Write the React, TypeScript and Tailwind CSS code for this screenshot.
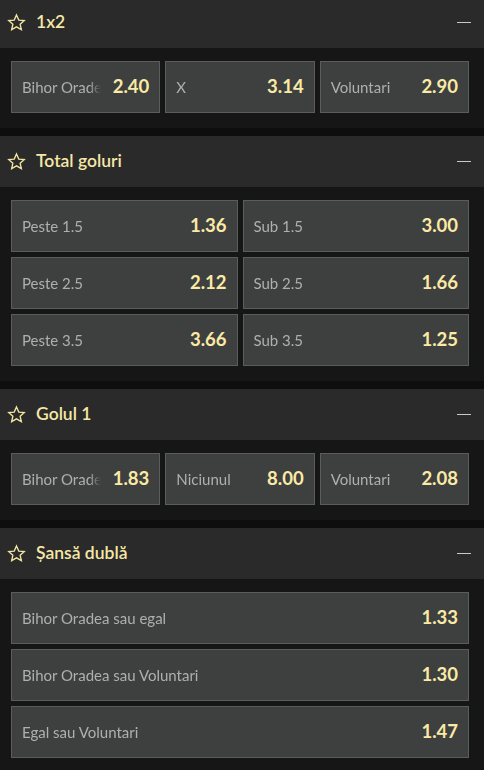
import React from "react";

// Odds market list (dark theme)

interface Selection {
  label: string;
  odds: string;
}

interface Market {
  title: string;
  cols: 1 | 2 | 3;
  selections: Selection[];
}

const markets: Market[] = [
  {
    title: "1x2",
    cols: 3,
    selections: [
      { label: "Bihor Oradea", odds: "2.40" },
      { label: "X", odds: "3.14" },
      { label: "Voluntari", odds: "2.90" },
    ],
  },
  {
    title: "Total goluri",
    cols: 2,
    selections: [
      { label: "Peste 1.5", odds: "1.36" },
      { label: "Sub 1.5", odds: "3.00" },
      { label: "Peste 2.5", odds: "2.12" },
      { label: "Sub 2.5", odds: "1.66" },
      { label: "Peste 3.5", odds: "3.66" },
      { label: "Sub 3.5", odds: "1.25" },
    ],
  },
  {
    title: "Golul 1",
    cols: 3,
    selections: [
      { label: "Bihor Oradea", odds: "1.83" },
      { label: "Niciunul", odds: "8.00" },
      { label: "Voluntari", odds: "2.08" },
    ],
  },
  {
    title: "Șansă dublă",
    cols: 1,
    selections: [
      { label: "Bihor Oradea sau egal", odds: "1.33" },
      { label: "Bihor Oradea sau Voluntari", odds: "1.30" },
      { label: "Egal sau Voluntari", odds: "1.47" },
    ],
  },
];

const StarIcon = () => (
  <svg width="19" height="19" viewBox="0 0 24 24" className="shrink-0">
    <polygon
      points="12,2.5 14.9,8.9 21.8,9.6 16.6,14.2 18.1,21 12,17.5 5.9,21 7.4,14.2 2.2,9.6 9.1,8.9"
      fill="none"
      stroke="#f3e4a2"
      strokeWidth="1.7"
      strokeLinejoin="miter"
    />
  </svg>
);

const gridCols = {
  1: "grid-cols-1",
  2: "grid-cols-2",
  3: "grid-cols-3",
};

const OddsButton: React.FC<{ sel: Selection }> = ({ sel }) => (
  <button className="flex h-[52px] items-center gap-[12px] border border-[#5b5d5c] bg-[#3e403f] pl-[10px] pr-[10px] text-left">
    <span
      className="min-w-0 flex-1 overflow-hidden whitespace-nowrap text-[15px] text-[#aeafae] [mask-image:linear-gradient(to_left,transparent_0,black_12px)]"
    >
      {sel.label}
    </span>
    <span className="shrink-0 text-[18.5px] font-bold text-[#fbeaa6]">
      {sel.odds}
    </span>
  </button>
);

const MarketBlock: React.FC<{ market: Market }> = ({ market }) => (
  <section className="bg-[#161616]">
    <header className="flex h-[51px] items-center bg-[#2a2a2a] pl-[7px] pr-[13px]">
      <StarIcon />
      <span className="ml-[10px] flex-1 text-[17.5px] font-semibold text-[#f6e8a6]">
        {market.title}
      </span>
      <span className="block h-[1.5px] w-[14px] bg-[#c8c8c8]" />
    </header>
    <div
      className={`grid ${gridCols[market.cols]} gap-[5px] pt-[13px] pb-[15px] pl-[11px] pr-[15px]`}
    >
      {market.selections.map((sel) => (
        <OddsButton key={sel.label} sel={sel} />
      ))}
    </div>
  </section>
);

export default function App() {
  return (
    <div className="h-[770px] w-[484px] overflow-hidden bg-[#0e0e0e] font-['Lato','Liberation_Sans',sans-serif]">
      <div className="-mt-[3px] flex flex-col gap-[8px]">
        {markets.map((m) => (
          <MarketBlock key={m.title} market={m} />
        ))}
      </div>
    </div>
  );
}
